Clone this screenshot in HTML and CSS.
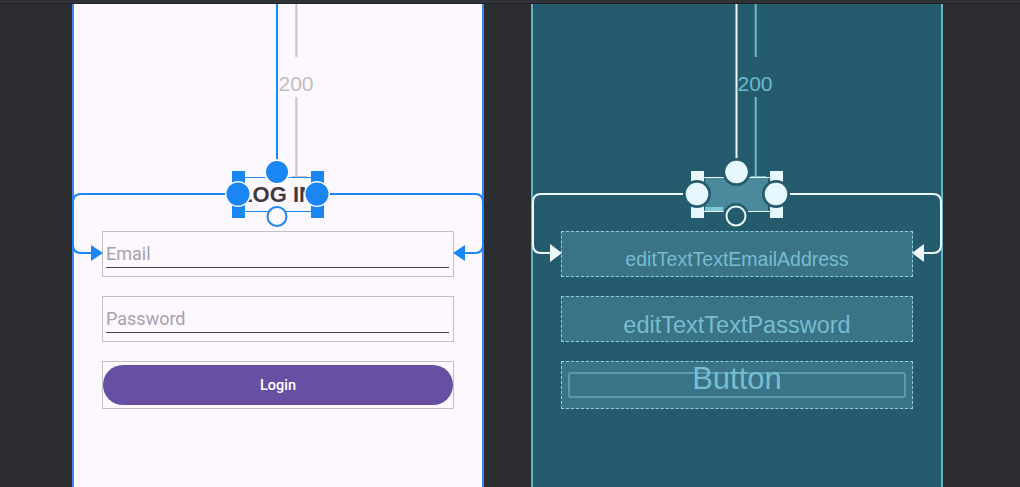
FILE: index.html
```html
<!DOCTYPE html>
<html lang="en">
<head>
  <meta charset="UTF-8">
  <title>Layout Editor - activity_login.xml</title>
  <link rel="stylesheet" href="styles.css">
</head>
<body>
  <div class="topbar"></div>

  <div class="stage">
    <!-- Design view -->
    <div class="screen design">
      <div class="field">
        <div class="input">Email</div>
      </div>
      <div class="field">
        <div class="input">Password</div>
      </div>
      <div class="field btn-field">
        <button class="login" type="button">Login</button>
      </div>

      <svg class="overlay" width="412" height="483" viewBox="72 4 412 483">
        <!-- top constraint + margin -->
        <line x1="277" y1="4" x2="277" y2="160" stroke="#1a86f4" stroke-width="2"/>
        <line x1="296.3" y1="4" x2="296.3" y2="57" stroke="#c3c3c3" stroke-width="2"/>
        <text x="296" y="91" class="dim gray">200</text>
        <line x1="296.3" y1="97" x2="296.3" y2="177" stroke="#c3c3c3" stroke-width="2"/>
        <line x1="292" y1="177" x2="307" y2="177" stroke="#c3c3c3" stroke-width="2"/>

        <!-- side constraints -->
        <path d="M226 194 H81 Q73 194 73 202 V245 Q73 253 81 253 H92" fill="none" stroke="#1a86f4" stroke-width="2"/>
        <polygon points="91,245 103,253 91,261" fill="#1a86f4"/>
        <path d="M329 194 H475 Q483 194 483 202 V245 Q483 253 475 253 H464" fill="none" stroke="#1a86f4" stroke-width="2"/>
        <polygon points="465,245 453,253 465,261" fill="#1a86f4"/>

        <!-- selected TextView -->
        <text x="277" y="202" class="title">LOG IN</text>
        <line x1="245" y1="177.5" x2="311" y2="177.5" stroke="#1a86f4" stroke-width="1"/>
        <line x1="245" y1="211.5" x2="311" y2="211.5" stroke="#1a86f4" stroke-width="1"/>
        <rect x="232" y="171" width="13" height="13" fill="#1a86f4"/>
        <rect x="311" y="171" width="13" height="13" fill="#1a86f4"/>
        <rect x="232" y="205" width="13" height="13" fill="#1a86f4"/>
        <rect x="311" y="205" width="13" height="13" fill="#1a86f4"/>
        <circle cx="277" cy="172" r="13" fill="#fdf7fe"/>
        <circle cx="277" cy="172" r="11" fill="#1a86f4"/>
        <circle cx="238" cy="194" r="13" fill="#fdf7fe"/>
        <circle cx="238" cy="194" r="11.5" fill="#1a86f4"/>
        <circle cx="317" cy="194" r="13" fill="#fdf7fe"/>
        <circle cx="317" cy="194" r="11.5" fill="#1a86f4"/>
        <circle cx="277" cy="216.5" r="9.5" fill="#fdf7fe" stroke="#1a86f4" stroke-width="2"/>
      </svg>
    </div>

    <!-- Blueprint view -->
    <div class="screen blueprint">
      <div class="field">
        <span class="bp-label email">editTextTextEmailAddress</span>
      </div>
      <div class="field">
        <span class="bp-label password">editTextTextPassword</span>
      </div>
      <div class="field">
        <div class="bp-button"></div>
        <span class="bp-label button">Button</span>
      </div>

      <svg class="overlay" width="412" height="483" viewBox="531 4 412 483">
        <line x1="736.5" y1="4" x2="736.5" y2="160" stroke="#eef8fb" stroke-width="2"/>
        <line x1="755.7" y1="4" x2="755.7" y2="57" stroke="#6fb8cd" stroke-width="2"/>
        <text x="755" y="91" class="dim cyan">200</text>
        <line x1="755.7" y1="97" x2="755.7" y2="177" stroke="#6fb8cd" stroke-width="2"/>
        <line x1="751" y1="177" x2="766" y2="177" stroke="#6fb8cd" stroke-width="2"/>

        <path d="M685 194 H541 Q533 194 533 202 V245 Q533 253 541 253 H551" fill="none" stroke="#eef8fb" stroke-width="2"/>
        <polygon points="550,244 562,253 550,262" fill="#eef8fb"/>
        <path d="M788 194 H933 Q941 194 941 202 V245 Q941 253 933 253 H923" fill="none" stroke="#eef8fb" stroke-width="2"/>
        <polygon points="924,244 912,253 924,262" fill="#eef8fb"/>

        <rect x="705" y="177" width="63" height="34" fill="#4a8a9c"/>
        <rect x="705" y="207" width="18" height="4" fill="#7cc6da"/>
        <line x1="704" y1="177.5" x2="770" y2="177.5" stroke="#eef8fb" stroke-width="1"/>
        <line x1="704" y1="211.5" x2="770" y2="211.5" stroke="#eef8fb" stroke-width="1"/>
        <rect x="691" y="171" width="13" height="13" fill="#e6f7fd"/>
        <rect x="770" y="171" width="13" height="13" fill="#e6f7fd"/>
        <rect x="691" y="205" width="13" height="13" fill="#e6f7fd"/>
        <rect x="770" y="205" width="13" height="13" fill="#e6f7fd"/>
        <circle cx="736.5" cy="172" r="14" fill="#245c6e"/>
        <circle cx="736.5" cy="172" r="11.3" fill="#e6f7fd"/>
        <circle cx="697" cy="194" r="14" fill="#245c6e"/>
        <circle cx="697" cy="194" r="11.3" fill="#e6f7fd"/>
        <circle cx="776" cy="194" r="14" fill="#245c6e"/>
        <circle cx="776" cy="194" r="11.3" fill="#e6f7fd"/>
        <circle cx="736" cy="216" r="13" fill="#245c6e"/>
        <circle cx="736" cy="216" r="9.5" fill="none" stroke="#eef8fb" stroke-width="2"/>
      </svg>
    </div>
  </div>
</body>
</html>
```

FILE: styles.css
```css
body {
  margin: 0;
  background-color: #2b2d30;
  font-family: Roboto, "Liberation Sans", sans-serif;
  overflow: hidden;
}

.topbar {
  height: 3px;
  background-color: #303235;
  border-bottom: 1px solid #1f2023;
}

.stage {
  display: flex;
  gap: 47px;
  padding-left: 72px;
}

.screen {
  position: relative;
  width: 412px;
  height: 483px;
  padding-top: 227px;
  box-sizing: border-box;
}

.design {
  background-color: #fdf7fe;
  box-shadow: inset 2px 0 #3d85f0, inset -2px 0 #3d85f0;
}

.blueprint {
  background-color: #245c6e;
  box-shadow: inset 2px 0 #62b2c8, inset -2px 0 #62b2c8;
}

.overlay {
  position: absolute;
  top: 0;
  left: 0;
}

/* widgets */

.field {
  position: relative;
  width: 352px;
  height: 46px;
  margin-left: 30px;
  margin-bottom: 19px;
  box-sizing: border-box;
  border: 1px solid #c4c0c6;
}

.field.btn-field {
  height: 48px;
  padding-top: 3px;
}

.input {
  margin: 9px 4px 0 3px;
  height: 26px;
  line-height: 26px;
  font-size: 18px;
  color: #a7a1ab;
  border-bottom: 1px solid #49454f;
}

.login {
  display: block;
  width: 100%;
  height: 40px;
  border: none;
  border-radius: 20px;
  background-color: #6750a4;
  color: #fff;
  font-family: Roboto, sans-serif;
  font-size: 14.5px;
  font-weight: 500;
  padding: 0;
}

/* blueprint */

.blueprint .field {
  border: 1px dashed #8ccfe0;
  background-color: #3a7385;
  display: flex;
  justify-content: center;
}

.blueprint .field:nth-child(3) {
  height: 48px;
}

.bp-label {
  position: relative;
  font-family: "Liberation Sans", Arial, sans-serif;
  color: #76bdd1;
}

.bp-label.email {
  font-size: 19.5px;
  line-height: 20px;
  padding-top: 17px;
}

.bp-label.password {
  font-size: 23.5px;
  line-height: 24px;
  padding-top: 16px;
}

.bp-label.button {
  font-size: 31px;
  line-height: 32px;
  padding-top: 1px;
}

.bp-button {
  position: absolute;
  top: 10px;
  bottom: 10px;
  left: 6px;
  right: 6px;
  border: 2px solid #5799ad;
  border-radius: 3px;
}

/* overlay text */

.dim {
  font-family: "Liberation Sans", Arial, sans-serif;
  font-size: 21px;
  text-anchor: middle;
}

.gray {
  fill: #bfbfbf;
}

.cyan {
  fill: #6fb8cd;
}

.title {
  font-family: "Liberation Sans", Arial, sans-serif;
  font-size: 22px;
  font-weight: bold;
  fill: #3e3a42;
  text-anchor: middle;
  white-space: pre;
}
```
